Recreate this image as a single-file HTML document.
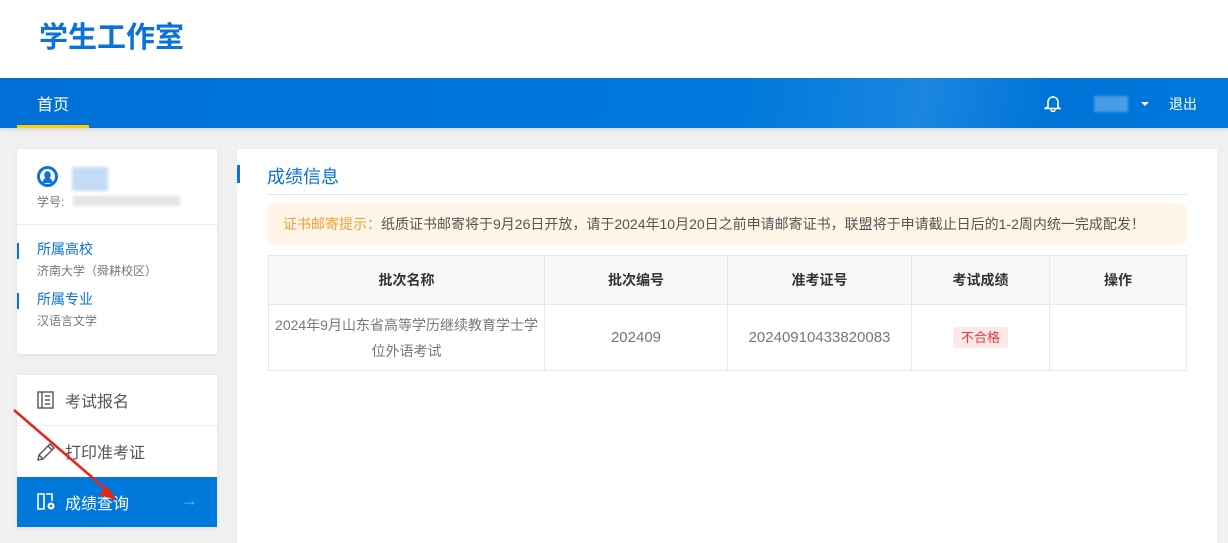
<!DOCTYPE html>
<html><head><meta charset="utf-8"><style>
*{margin:0;padding:0;box-sizing:border-box}
body{width:1228px;height:543px;overflow:hidden;background:#f0f0f0;font-family:"Liberation Sans","Noto Sans CJK SC",sans-serif;position:relative}
.abs{position:absolute}
.hdr{left:0;top:0;width:1228px;height:78px;background:#fff}
.logo{left:39px;top:14px;font-size:29px;font-weight:bold;color:#0a72d8}
.nav{left:0;top:78px;width:1228px;height:50px;background:linear-gradient(100deg,#0070d6 0%,#0078db 60%,#1a86e0 75%,#0074d8 85%,#0078db 100%);box-shadow:0 2px 4px rgba(0,0,0,.1)}
.card{background:#fff;box-shadow:0 1px 4px rgba(0,0,0,.08)}
table{border-collapse:collapse;position:absolute;left:268px;top:255px;width:919px}
td,th{border:1px solid #e8e8e8;text-align:center;font-size:14px}
th{background:#f8f8f8;height:49px;color:#333}
td{height:66px;color:#777;line-height:26px}
</style></head><body>
<div class="abs hdr"></div>
<div class="abs logo">学生工作室</div>
<div class="abs nav"></div>
<div class="abs" style="left:37px;top:91px;font-size:16px;color:#fff">首页</div>
<div class="abs" style="left:17px;top:125px;width:72px;height:3px;background:#ffcc00"></div>
<svg class="abs" style="left:1044px;top:94px" width="18" height="18" viewBox="0 0 18 18"><path d="M4 13V8a5 5 0 0 1 10 0v5l1.5 1.5h-15z M7 15.5a2 2 0 0 0 4 0 M9 2v1" fill="none" stroke="#fff" stroke-width="1.6"/></svg>
<div class="abs" style="left:1094px;top:96px;width:34px;height:16px;background:#5aa5e8;opacity:.8;filter:blur(1px)"></div>
<div class="abs" style="left:1141px;top:102px;width:0;height:0;border-left:4px solid transparent;border-right:4px solid transparent;border-top:4px solid #fff"></div>
<div class="abs" style="left:1169px;top:94px;font-size:14px;color:#fff">退出</div>

<div class="abs card" style="left:17px;top:149px;width:200px;height:205px"></div>
<svg class="abs" style="left:37px;top:166px" width="21" height="21" viewBox="0 0 21 21"><circle cx="10.5" cy="10.5" r="10.5" fill="#0a72d8"/><circle cx="10.5" cy="10.5" r="7.5" fill="#fff"/><path d="M5.5 17c0-3 2-4.5 3-5a3.3 3.8 0 1 1 4 0c1 .5 3 2 3 5z" fill="#0a72d8"/></svg>
<div class="abs" style="left:72px;top:167px;width:36px;height:24px;background:#c3dcf5;filter:blur(1.5px)"></div>
<div class="abs" style="left:37px;top:193px;font-size:12px;color:#777">学号:</div>
<div class="abs" style="left:73px;top:196px;width:107px;height:10px;background:#e4e4e4;filter:blur(1.5px)"></div>
<div class="abs" style="left:17px;top:224px;width:200px;height:1px;background:#ececec"></div>
<div class="abs" style="left:17px;top:243px;width:2px;height:16px;background:#0a72d8"></div>
<div class="abs" style="left:37px;top:239px;font-size:14px;color:#0a72d8">所属高校</div>
<div class="abs" style="left:37px;top:262px;font-size:12px;color:#777">济南大学（舜耕校区）</div>
<div class="abs" style="left:17px;top:293px;width:2px;height:16px;background:#0a72d8"></div>
<div class="abs" style="left:37px;top:289px;font-size:14px;color:#0a72d8">所属专业</div>
<div class="abs" style="left:37px;top:312px;font-size:12px;color:#777">汉语言文学</div>

<div class="abs card" style="left:17px;top:375px;width:200px;height:152px"></div>
<div class="abs" style="left:17px;top:425px;width:200px;height:1px;background:#ececec"></div>
<svg class="abs" style="left:37px;top:391px" width="18" height="18" viewBox="0 0 18 18"><rect x="1" y="1" width="15" height="16" fill="none" stroke="#555" stroke-width="1.4"/><path d="M5 1v16M8 5h5M8 9h5M8 13h5" stroke="#555" stroke-width="1.4"/></svg>
<div class="abs" style="left:65px;top:388px;font-size:16px;color:#555">考试报名</div>
<svg class="abs" style="left:36px;top:442px" width="20" height="20" viewBox="0 0 20 20"><path d="M2 18l1-5L14 2l4 4L7 17z M3 13l4 4 M12 4l4 4" fill="none" stroke="#555" stroke-width="1.4"/></svg>
<div class="abs" style="left:65px;top:439px;font-size:16px;color:#555">打印准考证</div>
<div class="abs" style="left:17px;top:477px;width:200px;height:50px;background:#0079db"></div>
<svg class="abs" style="left:37px;top:492px" width="20" height="20" viewBox="0 0 20 20"><path d="M1 2h6v15H1z M9 2h6v7" fill="none" stroke="#fff" stroke-width="1.6"/><circle cx="14" cy="14" r="3.5" fill="#fff"/><circle cx="14" cy="14" r="1.3" fill="#0079db"/></svg>
<div class="abs" style="left:65px;top:490px;font-size:16px;color:#fff">成绩查询</div>
<div class="abs" style="left:180px;top:490px;font-size:18px;color:#6fb2ee">→</div>
<svg class="abs" style="left:0;top:400px" width="140" height="110"><path d="M14 10L108 91" stroke="#e8241c" stroke-width="2.5"/><path d="M117 100l-18-5 8-9z" fill="#e8241c"/></svg>

<div class="abs" style="left:237px;top:149px;width:980px;height:394px;background:#fff"></div>
<div class="abs" style="left:237px;top:165px;width:3px;height:18px;background:#0a72d8"></div>
<div class="abs" style="left:267px;top:163px;font-size:18px;color:#0a72d8">成绩信息</div>
<div class="abs" style="left:267px;top:194px;width:920px;height:1px;background:#e6e6e6"></div>
<div class="abs" style="left:267px;top:203px;width:920px;height:42px;background:#fef5e8;border-radius:8px;font-size:14px;color:#555;padding:11px 0 0 16px">
<span style="color:#f5a033">证书邮寄提示：</span>纸质证书邮寄将于9月26日开放，请于2024年10月20日之前申请邮寄证书，联盟将于申请截止日后的1-2周内统一完成配发！</div>
<table>
<tr><th style="width:276px">批次名称</th><th style="width:183px">批次编号</th><th style="width:184px">准考证号</th><th style="width:138px">考试成绩</th><th>操作</th></tr>
<tr><td style="padding:0 4px">2024年9月山东省高等学历继续教育学士学位外语考试</td><td style="font-size:15px">202409</td><td style="font-size:15px">20240910433820083</td><td><span style="background:#fde8e8;color:#e83a3a;font-size:13px;padding:3px 8px;border-radius:3px">不合格</span></td><td></td></tr>
</table>
</body></html>
